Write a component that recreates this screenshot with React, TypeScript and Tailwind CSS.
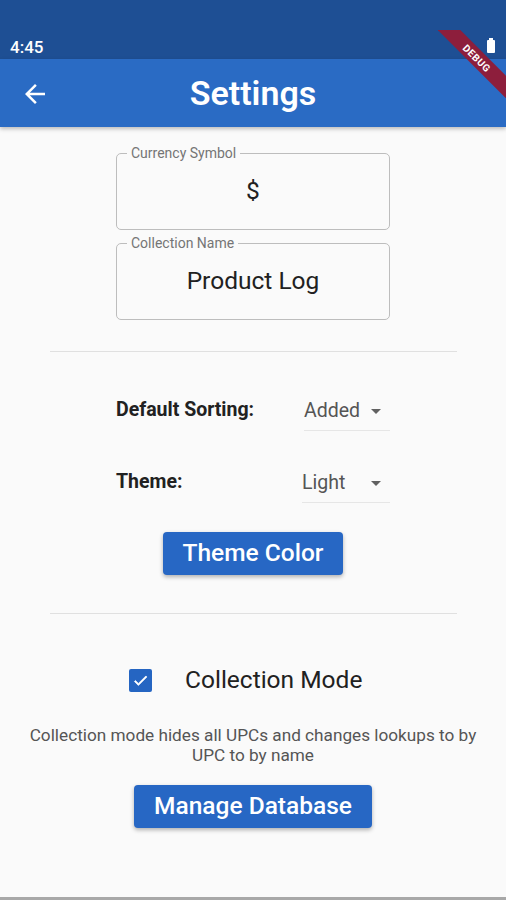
import React from 'react';

const font = { fontFamily: 'Roboto, "Noto Sans", sans-serif' };

function OutlinedField({ label, value }: { label: string; value: string }) {
  return (
    <div className="relative mx-auto flex h-[77px] w-[274px] items-center justify-center rounded-[5px] border border-[#bdbdbd]">
      <span className="absolute -top-[10px] left-[10px] bg-[#fafafa] px-[4px] text-[14px] leading-[18px] text-[#757575]">
        {label}
      </span>
      <span className="text-[24.5px] text-[#212121]">{value}</span>
    </div>
  );
}

function Dropdown({ value, width }: { value: string; width: string }) {
  return (
    <div className={`flex h-[42px] items-center justify-between border-b border-[#e6e6e6] pr-[9px] pt-[3px] ${width}`}>
      <span className="text-[19.5px] text-[#555]">{value}</span>
      <svg width="10" height="5" viewBox="0 0 10 5">
        <path d="M0 0h10L5 5z" fill="#616161" />
      </svg>
    </div>
  );
}

function BlueButton({ children }: { children: React.ReactNode }) {
  return (
    <button className="h-[43px] rounded-[4px] bg-[#2767c4] px-[20px] text-[24.5px] font-medium text-white shadow-[0_2px_4px_rgba(0,0,0,0.3)]">
      {children}
    </button>
  );
}

export default function App() {
  return (
    <div className="relative flex h-[900px] w-[506px] flex-col overflow-hidden bg-[#fafafa]" style={font}>
      {/* status bar */}
      <div className="flex h-[59px] items-end justify-between bg-[#1e4f94] px-[10px]">
        <span className="text-[17px] font-medium leading-[24px] text-white">4:45</span>
        <div className="mb-[6px] mr-[1px] flex flex-col items-center">
          <div className="h-[2px] w-[4px] bg-white" />
          <div className="h-[13px] w-[8px] rounded-[1px] bg-white" />
        </div>
      </div>

      {/* app bar */}
      <div className="relative z-10 flex h-[68px] items-center justify-center bg-[#2a6bc4] shadow-[0_2px_4px_rgba(0,0,0,0.25)]">
        <svg className="absolute left-[20px] top-[20px]" width="30" height="30" viewBox="0 0 24 24">
          <path d="M20 11H7.83l5.59-5.59L12 4l-8 8 8 8 1.41-1.41L7.83 13H20v-2z" fill="#fff" />
        </svg>
        <h1 className="text-[34px] font-semibold text-white">Settings</h1>
      </div>

      {/* content */}
      <div className="flex flex-col">
        <div className="mt-[26px]">
          <OutlinedField label="Currency Symbol" value="$" />
        </div>
        <div className="mt-[13px]">
          <OutlinedField label="Collection Name" value="Product Log" />
        </div>

        <div className="mx-auto mt-[31px] h-px w-[407px] bg-[#e0e0e0]" />

        <div className="mx-auto mt-[37px] flex w-[274px] items-center justify-between">
          <span className="text-[19.5px] font-bold text-[#212121]">Default Sorting:</span>
          <Dropdown value="Added" width="w-[86px]" />
        </div>
        <div className="mx-auto mt-[30px] flex w-[274px] items-center justify-between">
          <span className="text-[19.5px] font-bold text-[#212121]">Theme:</span>
          <Dropdown value="Light" width="w-[88px]" />
        </div>

        <div className="mt-[29px] flex justify-center">
          <BlueButton>Theme Color</BlueButton>
        </div>

        <div className="mx-auto mt-[38px] h-px w-[407px] bg-[#e0e0e0]" />

        <div className="mt-[54px] flex items-center gap-[33px] pl-[129px]">
          <div className="flex h-[23px] w-[23px] items-center justify-center rounded-[2px] bg-[#2565c2]">
            <svg width="17" height="17" viewBox="0 0 24 24">
              <path d="M9 16.17L4.83 12l-1.42 1.41L9 19 21 7l-1.41-1.41z" fill="#fff" stroke="#fff" strokeWidth="1" />
            </svg>
          </div>
          <span className="text-[24.5px] leading-[24px] text-[#212121]">Collection Mode</span>
        </div>

        <p className="mx-auto mt-[33px] w-[460px] text-center text-[17.2px] leading-[20px] text-[#555]">
          Collection mode hides all UPCs and changes lookups to by UPC to by name
        </p>

        <div className="mt-[20px] flex justify-center">
          <BlueButton>Manage Database</BlueButton>
        </div>
      </div>

      <div className="absolute bottom-0 left-0 h-[3px] w-full bg-[#a8a8a8]" />

      {/* debug banner */}
      <div className="absolute right-0 top-[30px] z-20 h-[68px] w-[68px] overflow-hidden">
        <div className="absolute left-[-21px] top-[20px] flex h-[16px] w-[120px] rotate-45 items-center justify-center bg-[#8d1e3c]">
          <span className="text-[10px] font-bold tracking-[0.5px] text-white">DEBUG</span>
        </div>
      </div>
    </div>
  );
}
